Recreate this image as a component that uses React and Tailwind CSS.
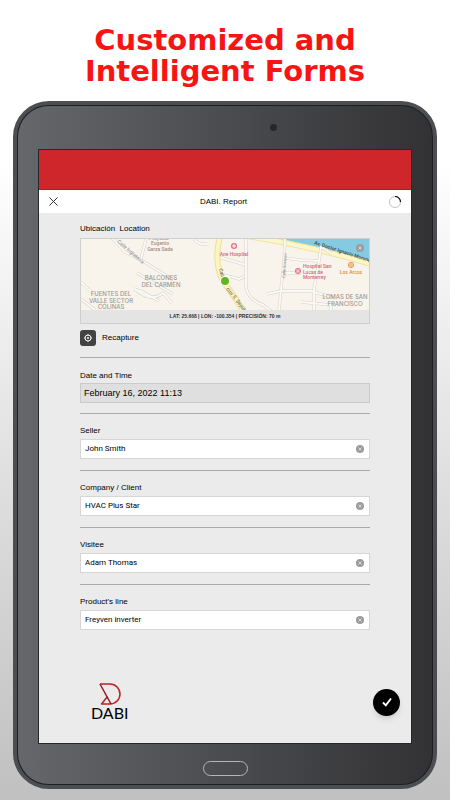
import React from 'react';

const fields = [
    { id: 'seller', label: 'Seller', value: 'John Smith' },
    { id: 'company', label: 'Company / Client', value: 'HVAC Plus Star' },
    { id: 'visitee', label: 'Visitee', value: 'Adam Thomas' },
    { id: 'product', label: "Product's line", value: 'Freyven inverter' },
];

const ClearIcon = () => (
    <svg className="size-2" viewBox="0 0 16 16" fill="none">
        <circle cx="8" cy="8" r="8" fill="#9b9b9b" />
        <path d="M5 5l6 6M11 5l-6 6" stroke="#e8e8e8" strokeWidth="1.6" />
    </svg>
);

const LocationMap = () => (
    <svg className="block h-[71px] w-full" viewBox="0 0 288 71" preserveAspectRatio="xMidYMid slice" fontFamily="Roboto, sans-serif">
        <rect width="288" height="71" fill="#f8f4ec" />
        <path d="M200 0Q245 10 288 25V0Z" fill="#84cbe2" />
        <path d="M166 -3Q230 7 290 25" fill="none" stroke="#f0e3a0" strokeWidth="6" />
        <path d="M166 -3Q230 7 290 25" fill="none" stroke="#fdf6c8" strokeWidth="4" />

        {/* side streets */}
        <g fill="none" strokeLinejoin="round">
            <g stroke="#d3d0cb" strokeWidth="3">
                <path d="M31 -1L44 13L60 21L94 42M65 0L60 20M56 34L92 55M53 50L62 53L78 62M0 43L18 60L28 72M0 60L14 71M113 0Q117 6 126 5" />
                <path d="M165 0V47Q166 60 182 66L190 72M204 0Q203 30 201 40L198 72M204 19L220 21L238 22L240 8L250 14M199 52H230L250 58M220 63L250 66V72M138 18L165 26M139 35L158 40L163 38M140 42L154 59M238 22L233 50V72" />
                <path d="M54 50Q70 64 82 54L91 64M203 34H220M200 52L186 55" />
            </g>
            <g stroke="#fbf9f4" strokeWidth="2">
                <path d="M31 -1L44 13L60 21L94 42M65 0L60 20M56 34L92 55M53 50L62 53L78 62M0 43L18 60L28 72M0 60L14 71M113 0Q117 6 126 5" />
                <path d="M165 0V47Q166 60 182 66L190 72M204 0Q203 30 201 40L198 72M204 19L220 21L238 22L240 8L250 14M199 52H230L250 58M220 63L250 66V72M138 18L165 26M139 35L158 40L163 38M140 42L154 59M238 22L233 50V72" />
                <path d="M54 50Q70 64 82 54L91 64M203 34H220M200 52L186 55" />
            </g>
        </g>

        {/* main avenue */}
        <path d="M139 -2C134 14 136 34 144 45S156 60 163 74" fill="none" stroke="#ece09c" strokeWidth="6" />
        <path d="M139 -2C134 14 136 34 144 45S156 60 163 74" fill="none" stroke="#fdf5bd" strokeWidth="4" />

        <g fill="#9c9994" fontFamily="Inter, sans-serif" fontSize="6" fontWeight="500" textAnchor="middle">
            <text x="80" y="41">BALCONES</text>
            <text x="80" y="48">DEL CARMEN</text>
            <text x="30" y="57">FUENTES DEL</text>
            <text x="30" y="64">VALLE SECTOR</text>
            <text x="30" y="70">COLINAS</text>
            <text x="264" y="60">LOMAS DE SAN</text>
            <text x="264" y="67">FRANCISCO</text>
        </g>
        <g fill="#aa8a80" fontSize="5" fontWeight="500" textAnchor="middle">
            <text x="78" y="1">Proyecto</text>
            <text x="79" y="6">Eugenio</text>
            <text x="79" y="12">Garza Sada</text>
        </g>
        <g fill="#d9647e" fontSize="5" fontWeight="500">
            <text x="153" y="17" textAnchor="middle">Ane Hospital</text>
            <text x="222" y="29">Hospital San</text>
            <text x="222" y="35">Lucas de</text>
            <text x="222" y="40">Monterrey</text>
        </g>
        <text x="270" y="35" fill="#d88a4a" fontSize="5" fontWeight="500" textAnchor="middle">Los Arcos</text>
        <text transform="translate(36 3) rotate(41)" fill="#8a8884" fontSize="5">Calle Inglaterra</text>
        <text transform="translate(204 39) rotate(-86)" fill="#8a8884" fontSize="4">Calle Sostono</text>
        <text transform="translate(233 5) rotate(18)" fill="#3f4444" fontSize="5" fontWeight="500">Av. Doctor Ignacio Morones</text>
        <text transform="translate(138 30) rotate(75)" fill="#4c4c48" fontSize="5">Call</text>
        <text transform="translate(145 50) rotate(52)" fill="#4c4c48" fontSize="5">ctor S. Sepúlv</text>

        <circle cx="153" cy="7" r="3" fill="#e2708a" />
        <path d="M153 5v4M151 7h4" stroke="#fff" />
        <circle cx="217" cy="32" r="3" fill="#e2708a" />
        <path d="M216 30v4M218 30v4M216 32h2" stroke="#fff" strokeWidth=".7" />
        <circle cx="270" cy="26" r="3" fill="#ea9648" />
        <path d="M269 24v4M271 24v4" stroke="#fff" strokeWidth=".8" />
        <circle cx="144" cy="42" r="5" fill="#fff" />
        <circle cx="144" cy="42" r="4" fill="#62b51c" />
    </svg>
);

const App = () => {
    return (
        <div className="min-h-screen bg-linear-to-b from-white from-20% to-[#c0c0c0] px-[13px] pt-[25px] pb-[10px] font-['Liberation_Sans',Arial,sans-serif] text-black">
            <h1 className="mb-[14px] text-center font-['DejaVu_Sans',sans-serif] text-[29px] leading-[31px] font-bold text-[#f91414]">
                Customized and
                <br />
                Intelligent Forms
            </h1>

            <div className="rounded-[36px] border-4 border-[#4c4e52] bg-[#1d1f23] p-px">
                <div className="rounded-[31px] bg-linear-to-r from-[#66676b] via-[#4b4c50] to-[#323234] px-[21px]">
                    <div className="relative h-11">
                        <span className="absolute top-[18px] left-[62%] size-[7px] rounded-full bg-[#26272b]"></span>
                    </div>

                    <main className="bg-[#ebebeb] outline outline-[#26272b]">
                        <div className="h-10 border-b border-[#b01d24] bg-[#cf262b]"></div>
                        <header className="flex h-[23px] items-center justify-between bg-white px-[10px]">
                            <button type="button" aria-label="Close">
                                <svg className="block size-[9px]" viewBox="0 0 9 9" fill="none" stroke="#333">
                                    <path d="M.5.5l8 8M8.5.5l-8 8" />
                                </svg>
                            </button>
                            <h2 className="text-[8px] leading-3">DABI. Report</h2>
                            <svg className="size-3" viewBox="0 0 12 12" fill="none">
                                <circle cx="6" cy="6" r="5.5" stroke="#aaa" strokeWidth=".7" />
                                <path d="M6 .5A5.5 5.5 0 0 1 11.5 6" stroke="#111" strokeWidth="1.2" />
                            </svg>
                        </header>

                        <form className="px-[41px] pt-[10px]" onSubmit={(e) => e.preventDefault()}>
                            <p className="text-[8px] leading-3">Ubicación&nbsp; Location</p>
                            <div className="relative mt-[3px] border border-[#cfcfcf]">
                                <LocationMap />
                                <button type="button" aria-label="Clear location" className="absolute top-[5px] right-[5px] flex">
                                    <ClearIcon />
                                </button>
                                <p className="bg-[#e4e4e4] text-center text-[5px] leading-[13px] font-bold text-[#333]">
                                    LAT: 25.668 | LON: -100.354 | PRECISIÓN: 70 m
                                </p>
                            </div>
                            <button type="button" className="mt-[6px] flex items-center gap-[6px] text-[8px] leading-4">
                                <span className="flex size-4 items-center justify-center rounded-[3px] bg-[#434343]">
                                    <svg className="size-[10px]" viewBox="0 0 10 10" fill="none" stroke="#fff">
                                        <circle cx="5" cy="5" r="3" />
                                        <circle cx="5" cy="5" r="1" fill="#fff" stroke="none" />
                                        <path d="M5 1v1M5 8v1M1 5h1M8 5h1" />
                                    </svg>
                                </span>
                                Recapture
                            </button>

                            <div className="mt-[11px] border-t border-[#a9a9a9] pt-3 pb-[10px]">
                                <label htmlFor="date" className="block text-[8px] leading-3">Date and Time</label>
                                <input id="date" readOnly defaultValue="February 16, 2022 11:13" className="mt-px block h-5 w-full border border-[#cacaca] bg-[#dfdfdf] px-[3px] text-[9px] outline-none" />
                            </div>

                            {fields.map((field) => (
                                <div key={field.id} className="border-t border-[#a9a9a9] pt-[11px] pb-[11px]">
                                    <label htmlFor={field.id} className="block text-[8px] leading-3">{field.label}</label>
                                    <div className="mt-[2px] flex h-5 items-center border border-[#d6d6d6] bg-white pr-[5px] pl-1">
                                        <input id={field.id} defaultValue={field.value} className="min-w-0 flex-1 font-[Roboto,sans-serif] text-[8px] leading-3 outline-none" />
                                        <button type="button" aria-label={`Clear ${field.label}`} className="flex">
                                            <ClearIcon />
                                        </button>
                                    </div>
                                </div>
                            ))}
                        </form>

                        <footer className="mt-[42px] flex items-center justify-between pr-[11px] pb-[22px] pl-[52px]">
                            <div className="flex flex-col items-center">
                                <svg className="h-[22px] w-[22px]" viewBox="0 0 22 22" fill="none" strokeWidth="1.5" strokeLinejoin="round">
                                    <path d="M1 1H11A10 10 0 0 1 11 21H2.5L8.5 13.5" stroke="#bd2026" />
                                    <path d="M1 1L12 21" stroke="#8e1a1e" />
                                </svg>
                                <span className="font-['Lato',sans-serif] text-[16px] leading-4">DABI</span>
                            </div>
                            <button type="button" aria-label="Submit" className="flex size-[27px] items-center justify-center rounded-full bg-black shadow-md">
                                <svg className="size-[10px]" viewBox="0 0 10 10" fill="none" stroke="#fff" strokeWidth="1.9">
                                    <path d="M1 5.5L3.8 8.3L9 1.5" />
                                </svg>
                            </button>
                        </footer>
                    </main>

                    <div className="flex h-[41px] items-center justify-center pt-[9px]">
                        <button type="button" aria-label="Home" className="h-[15px] w-[45px] rounded-full border border-[#b5b5b7]"></button>
                    </div>
                </div>
            </div>
        </div>
    );
};

export default App;
